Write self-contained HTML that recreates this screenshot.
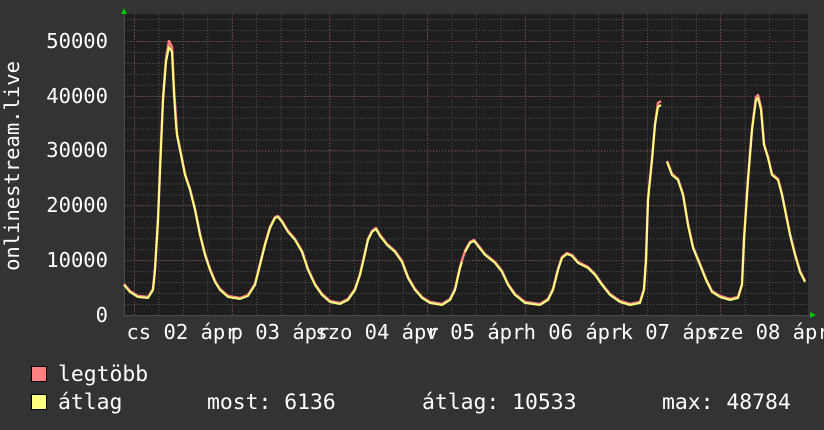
<!DOCTYPE html>
<html><head><meta charset="utf-8"><style>
html,body{margin:0;padding:0;background:#333333;}
body{width:824px;height:430px;overflow:hidden;position:relative;font-family:"DejaVu Sans Mono","Liberation Mono",monospace;}
svg{position:absolute;left:0;top:0;}
</style></head><body>
<svg width="824" height="430" xmlns="http://www.w3.org/2000/svg" font-family="DejaVu Sans Mono, Liberation Mono, monospace">
<defs>
<pattern id="g" x="134" y="315" width="24.43" height="10.96" patternUnits="userSpaceOnUse">
<line x1="0.5" y1="0" x2="0.5" y2="10.96" stroke="#5a5a5a" stroke-width="1" stroke-dasharray="1,2"/>
<line x1="0" y1="0.5" x2="24.43" y2="0.5" stroke="#5a5a5a" stroke-width="1" stroke-dasharray="1,2"/>
</pattern>
</defs>
<rect x="124" y="14" width="684" height="301" fill="#1e1e1e"/>
<rect x="124" y="14" width="684" height="301" fill="url(#g)"/>
<g stroke="#7a3a3a" stroke-width="1" stroke-dasharray="1,2">
<line x1="134.5" y1="14" x2="134.5" y2="315"/>
<line x1="232.5" y1="14" x2="232.5" y2="315"/>
<line x1="329.5" y1="14" x2="329.5" y2="315"/>
<line x1="427.5" y1="14" x2="427.5" y2="315"/>
<line x1="525.5" y1="14" x2="525.5" y2="315"/>
<line x1="622.5" y1="14" x2="622.5" y2="315"/>
<line x1="720.5" y1="14" x2="720.5" y2="315"/>
<line x1="124" y1="41.5" x2="808" y2="41.5"/>
<line x1="124" y1="96.5" x2="808" y2="96.5"/>
<line x1="124" y1="150.5" x2="808" y2="150.5"/>
<line x1="124" y1="205.5" x2="808" y2="205.5"/>
<line x1="124" y1="260.5" x2="808" y2="260.5"/>
</g>
<line x1="124" y1="315.5" x2="810" y2="315.5" stroke="#4a4a4a"/>
<line x1="124.5" y1="14" x2="124.5" y2="317" stroke="#4a4a4a"/>
<polygon points="121,14 127,14 124,8" fill="#00cc00"/>
<polygon points="810,312 810,318 816,315" fill="#00cc00"/>
<g fill="none" stroke-linejoin="round">
<polyline stroke="#ff8080" stroke-width="2.5" transform="translate(0,-1)" points="124,285 130,292 138,297 148,298 153,290 155,270 158,220 160,170 163,100 166,60 169,42 172,48 174,90 176,120 177,135 180,150 185,175 190,190 195,210 200,235 205,255 210,270 215,282 220,290 228,297 240,299 248,296 255,285 260,265 265,245 270,228 275,218 278,217 282,222 288,232 295,240 302,252 308,270 315,285 322,295 330,302 340,304 348,300 355,290 360,275 364,258 368,240 372,232 376,229 380,236 387,245 395,252 402,262 408,278 415,290 422,298 430,303 442,305 450,300 455,290 460,268 463,258 466,250 470,243 474,241 478,246 485,255 495,263 502,272 508,285 515,295 525,303 540,305 548,300 553,290 558,270 562,258 567,254 572,256 578,263 588,268 595,275 602,285 610,295 620,302 630,305 640,303 644,290 646,260 648,200 652,160 655,125 658,104 661,102"/>
<polyline stroke="#ff8080" stroke-width="2.5" transform="translate(0,-1)" points="667,162 672,175 678,180 683,195 688,225 693,248 700,265 706,280 712,292 720,297 730,300 738,298 742,285 744,240 748,180 752,130 756,98 758,96 761,108 764,145 768,158 772,175 778,180 782,195 786,215 790,235 795,255 800,272 805,282"/>
<polyline stroke="#ffff80" stroke-width="2" points="124,285 130,292 138,297 148,298 153,290 155,270 158,220 160,170 163,100 166,62 169,47 172,52 174,95 176,125 177,135 180,150 185,175 190,190 195,210 200,235 205,255 210,270 215,282 220,290 228,297 240,299 248,296 255,285 260,265 265,245 270,228 275,218 278,217 282,222 288,232 295,240 302,252 308,270 315,285 322,295 330,302 340,304 348,300 355,290 360,275 364,258 368,240 372,232 376,229 380,236 387,245 395,252 402,262 408,278 415,290 422,298 430,303 442,305 450,300 455,290 460,268 462,262"/>
<polyline stroke="#ffff80" stroke-width="2" points="465,252 470,243 474,241 478,246 485,255 495,263 502,272 508,285 515,295 525,303 540,305 548,300 553,290 558,270 562,258 567,254 572,256 578,263 588,268 595,275 602,285 610,295 620,302 630,305 640,303 644,290 646,260 648,200 652,160 655,125 658,107 661,105"/>
<polyline stroke="#ffff80" stroke-width="2" points="667,162 672,175 678,180 683,195 688,225 693,248 700,265 706,280 712,292 720,297 730,300 738,298 742,285 744,240 748,180 752,130 756,100 758,98 761,110 764,145 768,158 772,175 778,180 782,195 786,215 790,235 795,255 800,272 805,282"/>
</g>
<g fill="#ffffff" font-size="20.5" text-anchor="end">
<text x="108" y="48">50000</text>
<text x="108" y="103">40000</text>
<text x="108" y="157">30000</text>
<text x="108" y="212">20000</text>
<text x="108" y="267">10000</text>
<text x="108" y="322">0</text>
</g>
<text transform="translate(19,166) rotate(-90)" fill="#ffffff" font-size="20.5" text-anchor="middle">onlinestream.live</text>
<g fill="#ffffff" font-size="20.5" text-anchor="middle">
<text x="182" y="339">cs 02 ápr</text>
<text x="280" y="339">p 03 ápr</text>
<text x="377" y="339">szo 04 ápr</text>
<text x="475" y="339">v 05 ápr</text>
<text x="573" y="339">h 06 ápr</text>
<text x="670" y="339">k 07 ápr</text>
<text x="768" y="339">sze 08 ápr</text>
</g>
<rect x="31.5" y="366.5" width="15" height="15" fill="#ff8080" stroke="#000"/>
<rect x="31.5" y="394.5" width="15" height="15" fill="#ffff80" stroke="#000"/>
<g fill="#ffffff" font-size="21.4">
<text x="58" y="381">legtöbb</text>
<text x="58" y="409">átlag</text>
<text x="207" y="409">most: 6136</text>
<text x="422" y="409">átlag: 10533</text>
<text x="662" y="409">max: 48784</text>
</g>
</svg>
</body></html>
